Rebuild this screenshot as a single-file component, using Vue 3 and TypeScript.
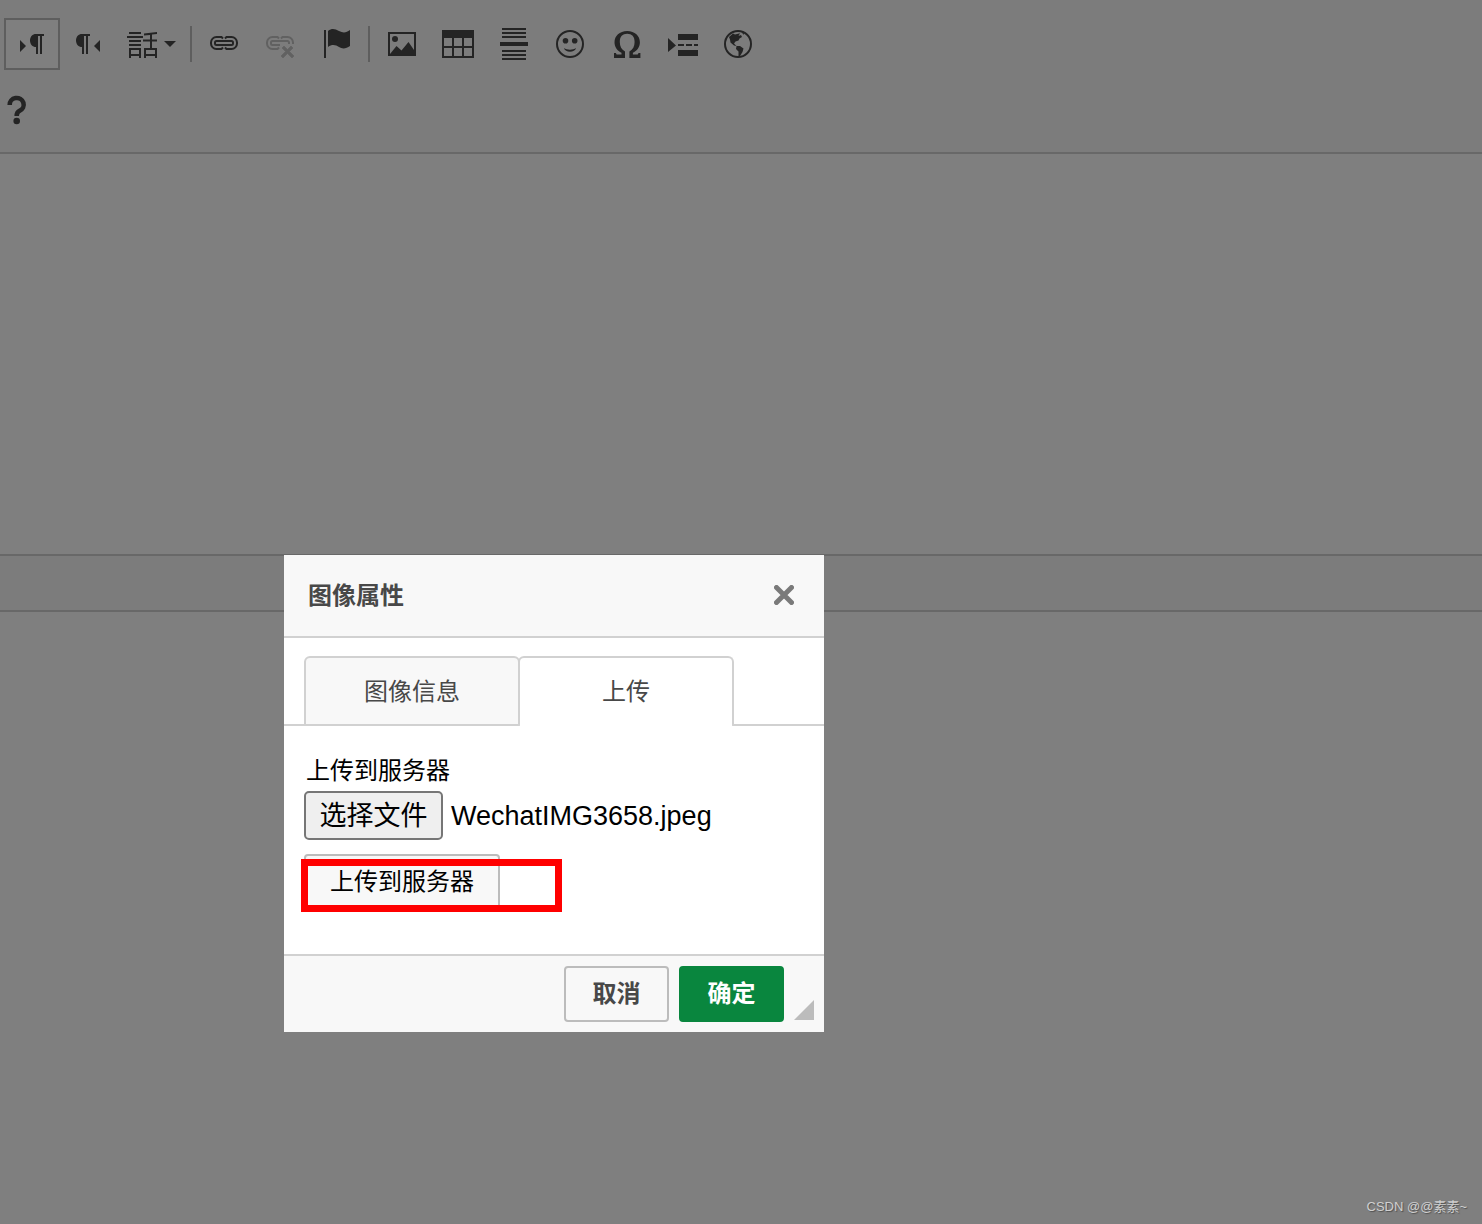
<script setup lang="ts">
import { ref } from 'vue'

interface Tool {
  id: string
  label: string
  active?: boolean
  disabled?: boolean
  menu?: boolean
}

const groups: Tool[][] = [
  [
    { id: 'ltr', label: '文字方向从左到右', active: true },
    { id: 'rtl', label: '文字方向从右到左' },
    { id: 'lang', label: '设置语言', menu: true },
  ],
  [
    { id: 'link', label: '插入/编辑超链接' },
    { id: 'unlink', label: '取消超链接', disabled: true },
    { id: 'flag', label: '设置锚点链接' },
  ],
  [
    { id: 'image', label: '图像' },
    { id: 'table', label: '表格' },
    { id: 'rule', label: '插入水平线' },
    { id: 'smiley', label: '表情符' },
    { id: 'omega', label: '插入特殊符号' },
    { id: 'pagebreak', label: '插入分页符' },
    { id: 'globe', label: 'IFrame' },
  ],
]

const pilcrow = 'H28V8H26V26H24V8H22V26H20V19C16.500 19 14 16.300 14 12.500S16.500 6 20 6Z'
const chain =
  '<path d="M15 10.500 13.500 9H8.500A5.500 5.500 0 0 0 3 14.500V15.500A5.500 5.500 0 0 0 8.500 21H13.500L15 19.500M17 10.500 18.500 9H23.500A5.500 5.500 0 0 1 29 14.500V15.500A5.500 5.500 0 0 1 23.500 21H18.500L17 19.500" fill="none" stroke="currentColor" stroke-width="2"/><rect x="7" y="13" width="18" height="4" rx="1.500" fill="none" stroke="currentColor" stroke-width="2"/>'
const brokenChain =
  '<path d="M15 10.500 13.500 9H8.500A5.500 5.500 0 0 0 3 14.500V15.500A5.500 5.500 0 0 0 8.500 21H13.500L15 19.500M17 10.500 18.500 9H23.500A5.500 5.500 0 0 1 29 14.500V16M16 17H8.500A1.500 1.500 0 0 1 7 15.500V14.500A1.500 1.500 0 0 1 8.500 13H23.500A1.500 1.500 0 0 1 25 14.500V16" fill="none" stroke="currentColor" stroke-width="2"/><path d="M18 20 20 18 23.500 21.500 27 18 29 20 25.500 23.500 30 28 28 30 23.500 25.500 19 30 17 28 21.500 23.500Z" stroke="currentColor" stroke-width="0.600"/>'

const icons: Record<string, string> = {
  ltr: `<path d="M4 12 10 18 4 24ZM20 6${pilcrow}"/>`,
  rtl: `<path d="M28 12 22 18 28 24Z"/><path transform="translate(-10 0)" d="M20 6${pilcrow}"/>`,
  lang: '<path d="M3 4H15V6H3ZM1 8H17V10H1ZM3 12H15V14H3ZM3 16H15V18H3ZM3 20H15V30H13V28H5V30H3ZM5 22V26H13V22ZM18 5.500 31 4V6L26 6.600V11.500H31V13.500H26V20H31V30H29V28H20V30H18V20H24V13.500H17V11.500H24V6.900L18 7.500ZM20 22V26H29V22Z" fill-rule="evenodd"/>',
  link: chain,
  unlink: brokenChain,
  flag: '<path d="M4 2H6V30H4ZM8 3C12 0 15 1 19 3S26 5 30 2V18C26 21 22 21 19 19S12 16 8 19Z"/>',
  image: '<path d="M2 4H30V28H2ZM4 6V26L10.500 18 15.500 22.500 22.500 14 28 22V6Z" fill-rule="evenodd"/><circle cx="9" cy="11" r="3"/>',
  table: '<path d="M0 2H32V30H0ZM2 10V18H10V10ZM12 10V18H20V10ZM22 10V18H30V10ZM2 20V28H10V20ZM12 20V28H20V20ZM22 20V28H30V20Z" fill-rule="evenodd"/>',
  rule: '<path d="M4 0H28V2H4ZM4 4H28V6H4ZM4 8H28V10H4ZM2 14H30V18H2ZM4 22H28V24H4ZM4 26H28V28H4ZM4 30H28V32H4Z"/>',
  smiley: '<circle cx="16" cy="16" r="13" fill="none" stroke="currentColor" stroke-width="2"/><circle cx="11.500" cy="12.700" r="2.800"/><circle cx="20.700" cy="12.700" r="2.800"/><path d="M10 20C13 22.300 19 22.300 22 20C21 25 11 25 10 20Z"/>',
  omega: '<path d="M17.200 3C9.500 3 4.500 8 4.500 14.200C4.500 19.300 7.500 23 11.500 24.700V26.500H7.500C6.500 26.500 6.200 26 6 25H4V30H15V23.500C11.500 21.500 9.800 18.500 9.800 14C9.800 8.500 12.500 5.800 17.200 5.800S24.600 8.500 24.600 14C24.600 18.500 22.900 21.500 19.400 23.500V30H30.400V25H28.400C28.200 26 27.900 26.500 26.900 26.500H22.900V24.700C26.900 23 29.900 19.300 29.900 14.200C29.900 8 24.900 3 17.200 3Z"/>',
  pagebreak: '<path d="M2 10 10 17.500 2 24ZM12 6H32V12H12ZM12 16H18V18H12ZM20 16H26V18H20ZM28 16H32V18H28ZM12 22H32V28H12Z"/>',
  globe: '<circle cx="16" cy="16" r="13" fill="none" stroke="currentColor" stroke-width="2"/><path d="M7 9 11 5.500 13 6.500 18 5.300 16.500 8 19 7 20 9 17.500 10.500 16.500 12.500 13.500 13.500 12 15.500 14.500 18 12 17.500 8.500 14.500 8 11.500ZM20 4.500 22 5 21.500 7ZM14.500 18 18 18 21.500 20.500 20.500 24 18 28 16.500 28 16.500 23.500 14 21Z"/>',
}

const activeTab = ref(1)
const tabs = ['图像信息', '上传']
const fileName = ref('WechatIMG3658.jpeg')
const fileInput = ref<HTMLInputElement | null>(null)

function onFile(e: Event) {
  const file = (e.target as HTMLInputElement).files?.[0]
  if (file) fileName.value = file.name
}
</script>

<template>
  <div class="page">
    <section class="editor">
      <div class="toolbar" role="toolbar">
        <div class="tool-row">
          <template v-for="(group, g) in groups" :key="g">
            <span v-if="g > 0" class="separator"></span>
            <button
              v-for="tool in group"
              :key="tool.id"
              type="button"
              class="tool"
              :class="{ active: tool.active, menu: tool.menu }"
              :disabled="tool.disabled"
              :aria-label="tool.label"
            >
              <svg width="32" height="32" viewBox="0 0 32 32" fill="currentColor" v-html="icons[tool.id]"></svg>
              <svg v-if="tool.menu" width="12" height="6" viewBox="0 0 12 6" fill="currentColor">
                <path d="M0 0H12L6 6Z" />
              </svg>
            </button>
          </template>
        </div>
        <div class="tool-row">
          <button type="button" class="tool help" aria-label="关于">
            <svg width="26" height="32" viewBox="0 0 26 32" fill="currentColor">
              <path d="M5.700 11A7 6.700 0 1 1 15.500 16.800C13.500 17.800 12.700 18.800 12.700 22" fill="none" stroke="currentColor" stroke-width="4.600" />
              <circle cx="12.700" cy="27" r="3.300" />
            </svg>
          </button>
        </div>
      </div>
      <div class="content" contenteditable="true"></div>
      <div class="status"></div>
    </section>

    <div class="cover"></div>

    <section class="dialog" role="dialog" aria-labelledby="dialog-title">
      <header class="dialog-head">
        <h1 id="dialog-title">图像属性</h1>
        <button type="button" class="close" aria-label="关闭">
          <svg width="20" height="20" viewBox="0 0 20 20">
            <path d="M2.500 2.500 17.500 17.500M17.500 2.500 2.500 17.500" stroke="currentColor" stroke-width="5" stroke-linecap="round" />
          </svg>
        </button>
      </header>
      <div class="tabs" role="tablist">
        <button
          v-for="(tab, i) in tabs"
          :key="tab"
          type="button"
          role="tab"
          class="tab"
          :class="{ selected: i === activeTab }"
          :aria-selected="i === activeTab"
          @click="activeTab = i"
        >{{ tab }}</button>
      </div>
      <div class="panel">
        <label class="field-label" for="upload-file">上传到服务器</label>
        <div class="file-row">
          <input id="upload-file" ref="fileInput" type="file" hidden @change="onFile" />
          <button type="button" class="choose" @click="fileInput?.click()">选择文件</button>
          <span class="file-name">{{ fileName }}</span>
        </div>
        <div class="send-row">
          <button type="button" class="send">上传到服务器</button>
          <span class="highlight"></span>
        </div>
      </div>
      <footer class="dialog-foot">
        <button type="button" class="action">取消</button>
        <button type="button" class="action primary">确定</button>
        <span class="resizer"></span>
      </footer>
    </section>

    <div class="watermark">CSDN @@素素~</div>
  </div>
</template>

<style>
body {
  margin: 0;
}
</style>

<style scoped>
.page {
  position: relative;
  min-height: 100vh;
  background: #fff;
  font-family: "Liberation Sans", "Noto Sans CJK SC", sans-serif;
}
.page * {
  box-sizing: border-box;
}
button {
  margin: 0;
  padding: 0;
  font: inherit;
  color: inherit;
  cursor: pointer;
}
svg {
  display: block;
}
.toolbar {
  display: flex;
  flex-direction: column;
  gap: 14px;
  padding: 18px 4px 16px;
  background: #f8f8f8;
  border-bottom: 2px solid #d1d1d1;
}
.tool-row {
  display: flex;
  align-items: center;
}
.tool {
  display: flex;
  align-items: center;
  justify-content: center;
  width: 56px;
  height: 52px;
  border: 2px solid transparent;
  background: none;
  color: #484848;
}
.tool.active {
  border-color: #bcbcbc;
  background: #fff;
}
.tool.menu {
  width: 70px;
  gap: 6px;
}
.tool.help {
  width: 26px;
  border: 0;
}
.tool:disabled svg {
  opacity: 0.3;
}
.separator {
  width: 2px;
  height: 36px;
  margin: 0 4px;
  background: #bcbcbc;
}
.content {
  height: 400px;
  outline: none;
}
.status {
  height: 58px;
  background: #f8f8f8;
  border-top: 2px solid #d1d1d1;
  border-bottom: 2px solid #d1d1d1;
}
.cover {
  position: absolute;
  inset: 0;
  background: rgba(0, 0, 0, 0.5);
}
.dialog {
  position: absolute;
  top: 555px;
  left: 284px;
  width: 540px;
  background: #fff;
  font-size: 24px;
}
.dialog-head {
  display: flex;
  align-items: center;
  justify-content: space-between;
  padding: 22px 30px 21px 24px;
  background: #f8f8f8;
  border-bottom: 2px solid #d1d1d1;
}
h1 {
  margin: 0;
  font-size: 24px;
  line-height: 38px;
  font-weight: 700;
  color: #484848;
}
.close {
  border: 0;
  background: none;
  color: #7a7a7a;
}
.close svg {
  margin-bottom: 2px;
}
.tabs {
  display: flex;
  padding: 18px 20px 0;
  border-bottom: 2px solid #d1d1d1;
}
.tab {
  width: 216px;
  height: 70px;
  margin-bottom: -2px;
  padding-bottom: 4px;
  border: 2px solid #d1d1d1;
  border-radius: 6px 6px 2px 2px;
  background: #f8f8f8;
  color: #484848;
}
.tab + .tab {
  margin-left: -2px;
}
.tab.selected {
  border-bottom: 0;
  padding-bottom: 6px;
  background: #fff;
}
.panel {
  padding: 28px 20px 44px;
  color: #000;
}
.field-label {
  display: block;
  padding: 0 2px;
  line-height: 34px;
}
.file-row {
  display: flex;
  align-items: center;
  gap: 8px;
  margin: 3px 0 14px;
  font-size: 27px;
}
.choose {
  width: 139px;
  height: 49px;
  padding-top: 2px;
  border: 2px solid #767676;
  border-radius: 5px;
  background: #efefef;
  line-height: 43px;
}
.file-name {
  padding-top: 2px;
  white-space: nowrap;
}
.send-row {
  position: relative;
}
.send {
  display: block;
  width: 196px;
  height: 56px;
  padding-bottom: 6px;
  border: 2px solid #bcbcbc;
  border-radius: 4px;
  background: #f8f8f8;
}
.highlight {
  position: absolute;
  top: 5px;
  left: -3px;
  width: 261px;
  height: 53px;
  border: 7px solid #ff0000;
  pointer-events: none;
}
.dialog-foot {
  display: flex;
  align-items: flex-end;
  justify-content: flex-end;
  gap: 10px;
  padding: 10px;
  background: #f8f8f8;
  border-top: 2px solid #d1d1d1;
}
.action {
  width: 105px;
  height: 56px;
  padding-bottom: 6px;
  border: 2px solid #bcbcbc;
  border-radius: 4px;
  background: #f8f8f8;
  color: #484848;
  font-weight: 700;
}
.action.primary {
  border-color: #09863e;
  background: #09863e;
  color: #fff;
}
.resizer {
  width: 20px;
  height: 20px;
  margin-bottom: 2px;
  background: #bcbcbc;
  clip-path: polygon(100% 0, 100% 100%, 0 100%);
}
.watermark {
  position: absolute;
  right: 15px;
  bottom: 7px;
  font-size: 13px;
  line-height: 20px;
  color: #d0d0d0;
  text-shadow: 1px 1px 1px #505050;
}
</style>
